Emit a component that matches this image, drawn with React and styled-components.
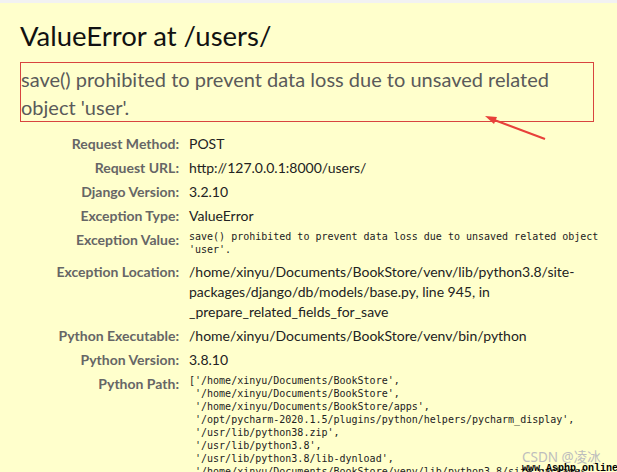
import React from 'react'
import styled, { createGlobalStyle } from 'styled-components'

const GlobalStyle = createGlobalStyle`
  html, body {
    margin: 0;
    padding: 0;
    background: #ffffcc;
  }
  body {
    font-family: Lato, "Noto Sans", sans-serif;
    overflow: hidden;
  }
`

const Summary = styled.div`
  position: relative;
  width: 617px;
  height: 472px;
  box-sizing: border-box;
  background: #ffffcc;
  border-top: 3px solid #f2f2f2;
  padding: 15px 0 0 20px;
  overflow: hidden;
`

const Title = styled.h1`
  margin: 0;
  font-size: 27.5px;
  font-weight: 400;
  line-height: 36px;
  color: #111;
`

const ExceptionValue = styled.pre`
  margin: 8px 0 10px 0;
  width: 574px;
  height: 60px;
  box-sizing: border-box;
  border: 1px solid #d8443f;
  padding: 2px 0 0 0;
  font-family: Lato, "Noto Sans", sans-serif;
  font-size: 20px;
  line-height: 28px;
  color: #5a5a5a;
  white-space: pre-wrap;
`

const Meta = styled.div`
  display: grid;
  grid-template-columns: 159px 410px;
  column-gap: 10px;
`

const Label = styled.div`
  text-align: right;
  font-weight: 700;
  font-size: 14px;
  line-height: 20px;
  padding: 2px 0;
  color: #666;
`

const Value = styled.div`
  font-size: 14px;
  line-height: 20px;
  padding: 2px 0;
  color: #222;
`

const Mono = styled.pre`
  margin: 0;
  padding: 2px 0 ${p => p.$pb || 2}px 0;
  font-family: "DejaVu Sans Mono", monospace;
  font-size: 10px;
  line-height: 13px;
  color: #222;
  white-space: pre;
`

const Arrow = styled.svg`
  position: absolute;
  left: 480px;
  top: 105px;
`

const Watermark = styled.div`
  position: absolute;
  left: 522px;
  top: 445px;
  font-family: "Noto Sans", "Noto Sans CJK SC", sans-serif;
  font-size: 13.5px;
  line-height: 18px;
  color: #bdbdbd;
`

const Stamp = styled.div`
  position: absolute;
  left: 522px;
  top: 459px;
  font-family: "Liberation Mono", monospace;
  font-size: 10px;
  line-height: 13px;
  font-weight: 700;
  color: #000;
`

const rows = [
  ['Request Method:', 'POST'],
  ['Request URL:', 'http://127.0.0.1:8000/users/'],
  ['Django Version:', '3.2.10'],
  ['Exception Type:', 'ValueError'],
]

const pythonPath = `['/home/xinyu/Documents/BookStore',
 '/home/xinyu/Documents/BookStore',
 '/home/xinyu/Documents/BookStore/apps',
 '/opt/pycharm-2020.1.5/plugins/python/helpers/pycharm_display',
 '/usr/lib/python38.zip',
 '/usr/lib/python3.8',
 '/usr/lib/python3.8/lib-dynload',
 '/home/xinyu/Documents/BookStore/venv/lib/python3.8/site-packages',`

export default function App() {
  return (
    <Summary>
      <GlobalStyle />
      <Title>ValueError at /users/</Title>
      <ExceptionValue>save() prohibited to prevent data loss due to unsaved related object 'user'.</ExceptionValue>
      <Meta>
        {rows.map(([k, v]) => (
          <React.Fragment key={k}>
            <Label>{k}</Label>
            <Value>{v}</Value>
          </React.Fragment>
        ))}
        <Label>Exception Value:</Label>
        <Mono $pb={4}>{`save() prohibited to prevent data loss due to unsaved related object\n'user'.`}</Mono>
        <Label>Exception Location:</Label>
        <Value>/home/xinyu/Documents/BookStore/venv/lib/python3.8/site-packages/django/db/models/base.py, line 945, in _prepare_related_fields_for_save</Value>
        <Label>Python Executable:</Label>
        <Value>/home/xinyu/Documents/BookStore/venv/bin/python</Value>
        <Label>Python Version:</Label>
        <Value>3.8.10</Value>
        <Label>Python Path:</Label>
        <Mono>{pythonPath}</Mono>
      </Meta>
      <Arrow width="70" height="35" viewBox="0 0 70 35">
        <line x1="9" y1="10" x2="65" y2="31" stroke="#e8403a" strokeWidth="2.2" />
        <polygon points="5,8 17,9 14,16" fill="#e8403a" />
      </Arrow>
      <Watermark>CSDN @凌冰</Watermark>
      <Stamp>www.Asphp.online</Stamp>
    </Summary>
  )
}
